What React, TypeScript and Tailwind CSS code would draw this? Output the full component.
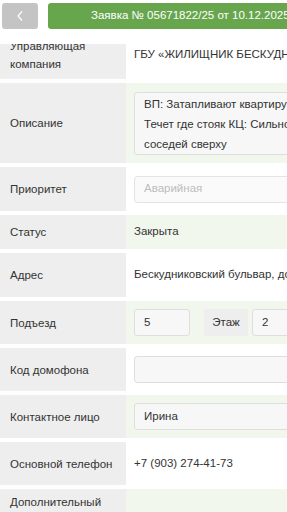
import { ReactNode } from 'react'

type RowProps = {
  label: ReactNode
  children?: ReactNode
  green?: boolean
  h: string
}

function Row({ label, children, green, h }: RowProps) {
  return (
    <div className={`grid grid-cols-[126px_1fr] ${h}`}>
      <div className="flex items-center bg-[#eeeeee] pl-[10px] pr-[6px] leading-[18px]">{label}</div>
      <div className={`flex items-center whitespace-nowrap px-[8px] ${green ? 'bg-[#f2f7ed]' : 'bg-white'}`}>
        {children}
      </div>
    </div>
  )
}

function Field({ children, className = '' }: { children?: ReactNode; className?: string }) {
  return (
    <div
      className={`flex h-[27px] items-center rounded-[3px] border border-[#dedede] bg-[#f7f7f7] px-[9px] ${className}`}
    >
      {children}
    </div>
  )
}

export default function App() {
  return (
    <div className="h-[512px] w-[287px] overflow-hidden bg-white font-['Liberation_Sans',Arial,sans-serif] text-[11.5px] text-[#333]">
      <div className="w-[360px]">
        <header className="relative z-10 flex h-[44px] gap-[10px] bg-white px-[2px] pt-[3px]">
          <button className="flex h-[26px] w-[36px] shrink-0 items-center justify-center rounded-[3px] bg-[#c4c4c4]">
            <svg width="8" height="12" viewBox="0 0 8 12" fill="none">
              <path d="M6 1.5 L2 6 L6 10.5" stroke="white" strokeWidth="1.2" />
            </svg>
          </button>
          <div className="flex h-[26px] flex-1 items-center whitespace-nowrap rounded-[3px] bg-[#68a64e] pl-[43px] text-white">
            Заявка № 05671822/25 от 10.12.2025
          </div>
        </header>

        <div className="-mt-[13px] flex flex-col gap-[4px]">
          <Row label="Управляющая компания" h="h-[48px]">
            ГБУ «ЖИЛИЩНИК БЕСКУДНИКОВО»
          </Row>
          <Row label="Описание" green h="h-[80px]">
            <div className="h-[63px] flex-1 rounded-[3px] border border-[#dedede] bg-[#f7f7f7] px-[9px] py-[1px] leading-[20px]">
              <div>ВП: Затапливают квартиру</div>
              <div>Течет где стояк КЦ: Сильно</div>
              <div>соседей сверху</div>
            </div>
          </Row>
          <Row label="Приоритет" h="h-[44px]">
            <Field className="flex-1 border-[#e4e4e4] bg-[#fafafa] text-[#bdbdbd]">Аварийная</Field>
          </Row>
          <Row label="Статус" green h="h-[34px]">
            Закрыта
          </Row>
          <Row label="Адрес" h="h-[44px]">
            Бескудниковский бульвар, дом 12
          </Row>
          <Row label="Подъезд" green h="h-[43px]">
            <Field className="w-[56px]">5</Field>
            <div className="ml-[14px] flex h-[27px] w-[44px] items-center justify-center bg-[#eeeeee]">Этаж</div>
            <Field className="ml-[4px] flex-1">2</Field>
          </Row>
          <Row label="Код домофона" h="h-[43px]">
            <Field className="flex-1" />
          </Row>
          <Row label="Контактное лицо" green h="h-[43px]">
            <Field className="flex-1">Ирина</Field>
          </Row>
          <Row label="Основной телефон" h="h-[43px]">
            +7 (903) 274-41-73
          </Row>
          <Row label="Дополнительный телефон" green h="h-[43px]" />
        </div>
      </div>
    </div>
  )
}
